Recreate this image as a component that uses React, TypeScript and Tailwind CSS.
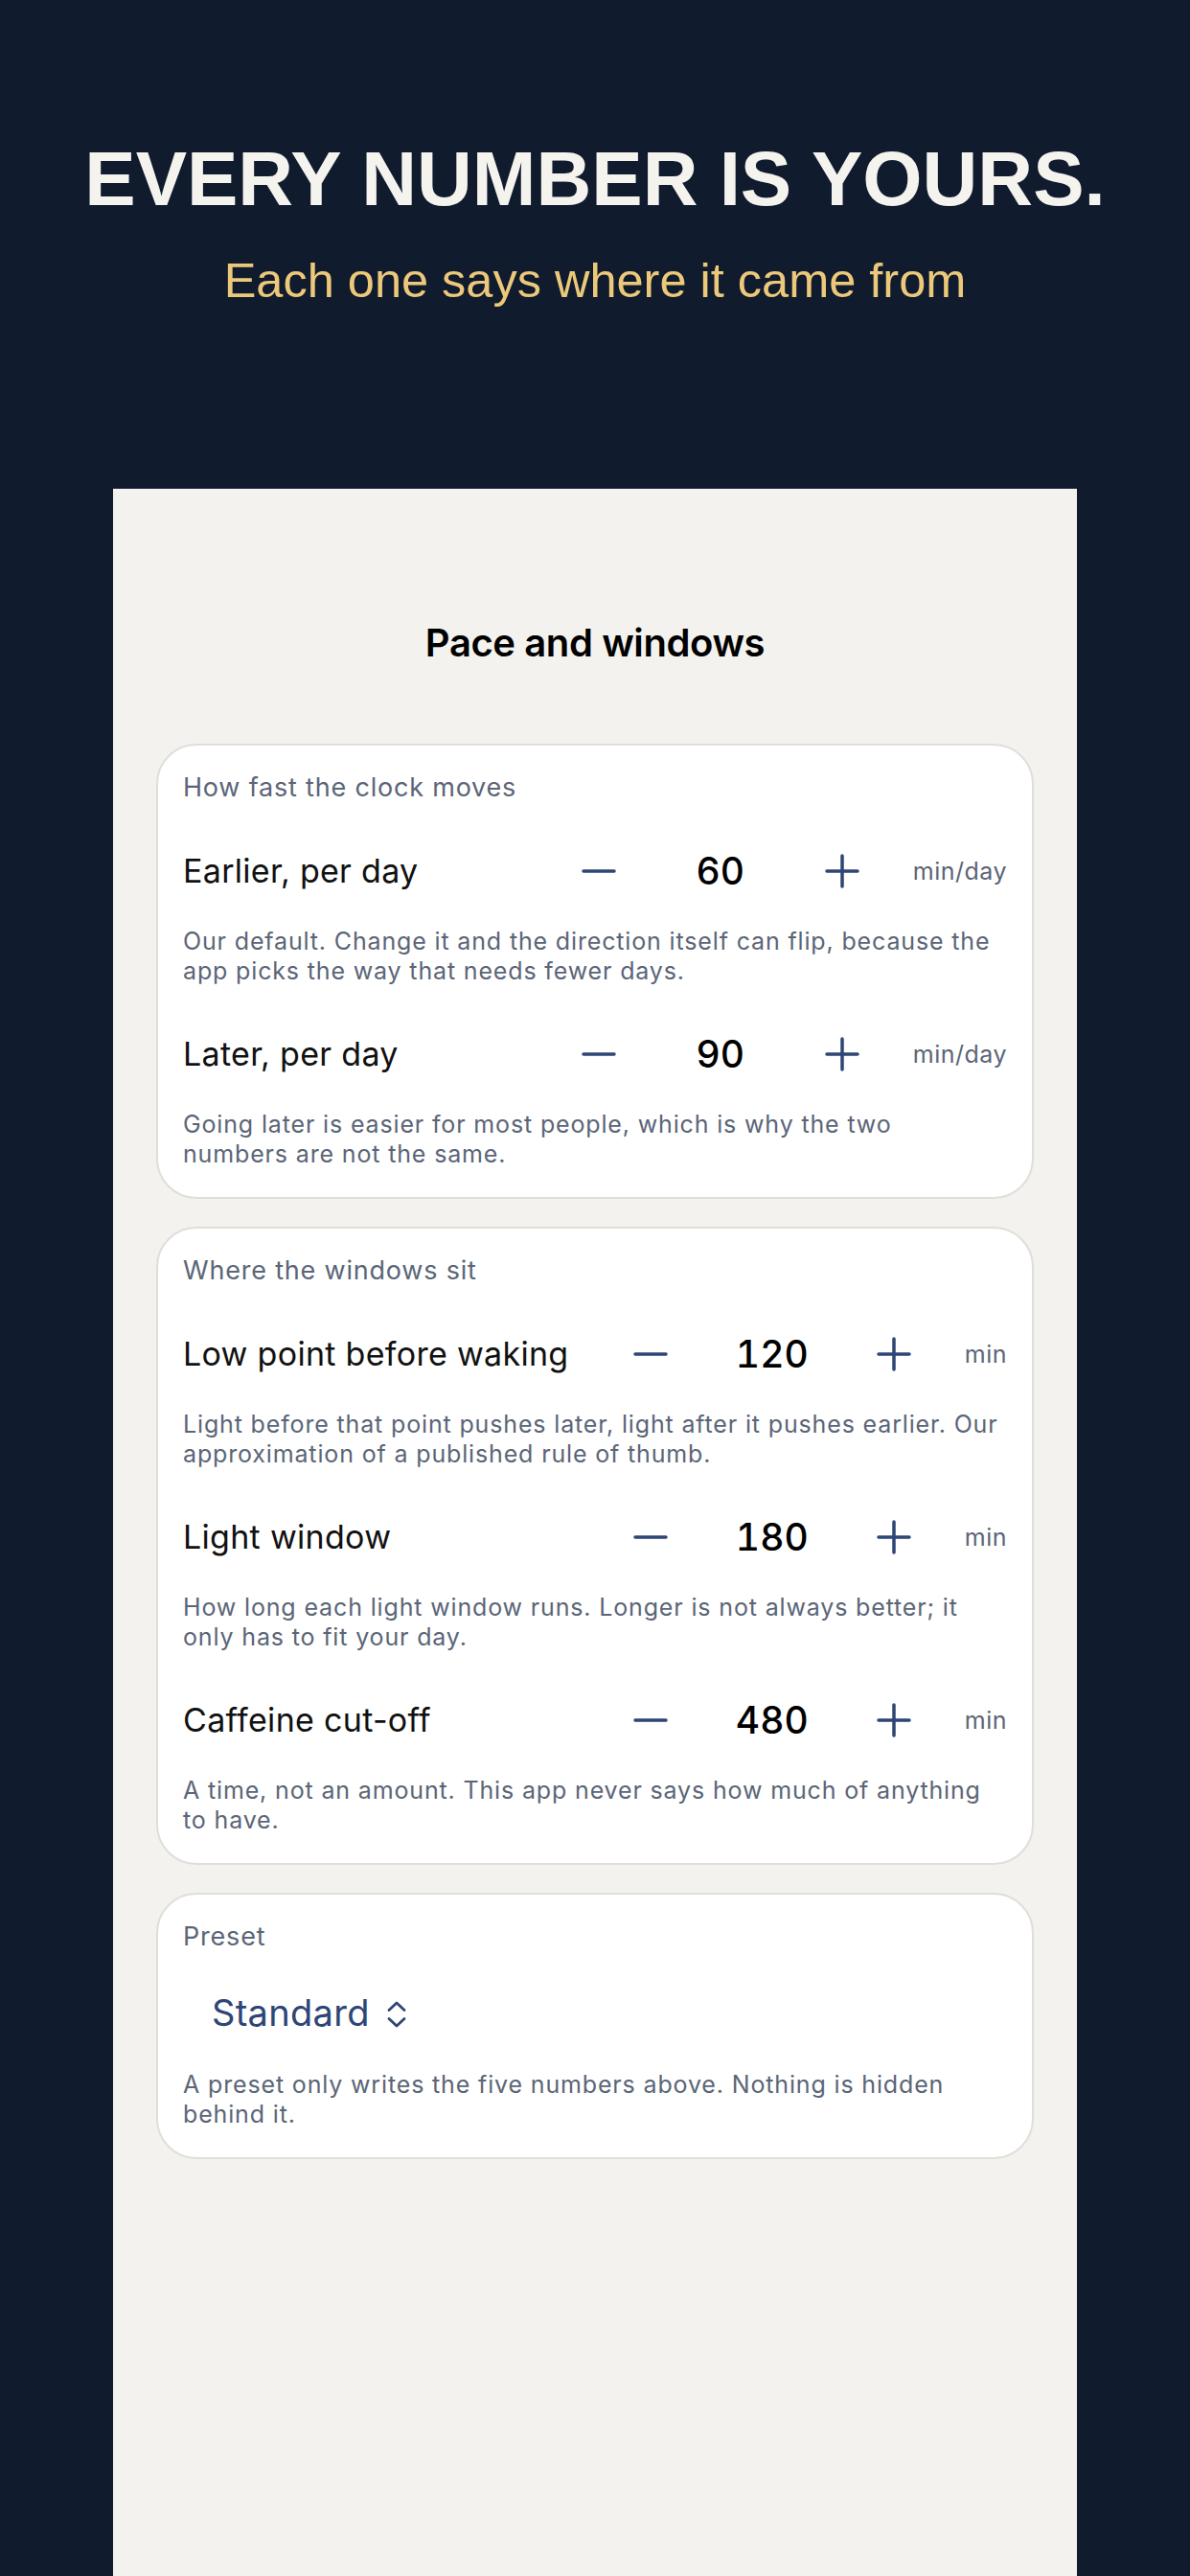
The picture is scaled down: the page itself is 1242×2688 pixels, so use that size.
import React from "react";

const NAVY = "#2d4675";

function Minus() {
  return (
    <svg width="36" height="36" viewBox="0 0 36 36" fill="none">
      <line x1="2" y1="18" x2="34" y2="18" stroke={NAVY} strokeWidth="3.5" strokeLinecap="round" />
    </svg>
  );
}

function Plus() {
  return (
    <svg width="36" height="36" viewBox="0 0 36 36" fill="none">
      <line x1="2" y1="18" x2="34" y2="18" stroke={NAVY} strokeWidth="3.5" strokeLinecap="round" />
      <line x1="18" y1="2" x2="18" y2="34" stroke={NAVY} strokeWidth="3.5" strokeLinecap="round" />
    </svg>
  );
}

function UpDown() {
  return (
    <svg width="22" height="30" viewBox="0 0 22 30" fill="none" className="mt-[4px]">
      <polyline points="3,10.5 11,3 19,10.5" stroke={NAVY} strokeWidth="2.8" strokeLinecap="round" strokeLinejoin="round" />
      <polyline points="3,19.5 11,27 19,19.5" stroke={NAVY} strokeWidth="2.8" strokeLinecap="round" strokeLinejoin="round" />
    </svg>
  );
}

function Desc({ lines, className }: { lines: string[]; className?: string }) {
  return (
    <p className={`text-[25px] leading-[31px] tracking-[0.85px] text-[#5b6577] ${className ?? ""}`}>
      {lines.map((l, i) => (
        <span key={i} className="block whitespace-nowrap">
          {l}
        </span>
      ))}
    </p>
  );
}

function Row({ label, value, unit, desc }: { label: string; value: string; unit: string; desc: string[] }) {
  return (
    <div className="flex flex-col">
      <div className="flex h-[80px] items-center">
        <div className="flex-1 text-[34px] leading-[40px] tracking-[0.3px] text-[#111111]">{label}</div>
        <div className="flex items-center">
          <div className="flex w-[60px] items-center justify-center"><Minus /></div>
          <div className="w-[194px] text-center text-[39px] font-medium leading-[44px] text-black tabular-nums">{value}</div>
          <div className="flex w-[60px] items-center justify-center"><Plus /></div>
        </div>
        <div className="ml-[44px] text-[25px] leading-[30px] tracking-[0.5px] text-[#5b6577]">{unit}</div>
      </div>
      <Desc lines={desc} className="mt-[18px]" />
    </div>
  );
}

function Card({ title, children }: { title: string; children: React.ReactNode }) {
  return (
    <div className="rounded-[42px] border-2 border-[#e0ded8] bg-white px-[26px] pt-[28px] pb-[29px]">
      <div className="text-[27px] leading-[32px] tracking-[0.8px] text-[#5b6577]">{title}</div>
      <div className="mt-[31px] flex flex-col gap-[31px]">{children}</div>
    </div>
  );
}

export default function App() {
  return (
    <div className="flex min-h-[2688px] w-full flex-col bg-[#111b2e]" style={{ fontFamily: "Inter, 'Noto Sans', sans-serif" }}>
      <header className="flex flex-col items-center pt-[147px]">
        <h1 className="text-[80px] font-bold leading-none text-[#f5f3ee]" style={{ fontFamily: "'Liberation Sans', Arial, sans-serif" }}>
          EVERY NUMBER IS YOURS.
        </h1>
        <p className="mt-[41px] text-[50.5px] leading-none text-[#ecc97a]" style={{ fontFamily: "'Liberation Sans', Arial, sans-serif" }}>
          Each one says where it came from
        </p>
      </header>
      <main className="mx-[118px] mt-[191px] flex-1 bg-[#f3f2ee] px-[45px] pt-[141px] pb-[60px]">
        <h2 className="text-center text-[40px] font-semibold leading-none tracking-[-0.4px] text-black">Pace and windows</h2>
        <div className="mt-[85px] flex flex-col gap-[29px]">
          <Card title="How fast the clock moves">
            <Row
              label="Earlier, per day"
              value="60"
              unit="min/day"
              desc={[
                "Our default. Change it and the direction itself can flip, because the",
                "app picks the way that needs fewer days.",
              ]}
            />
            <Row
              label="Later, per day"
              value="90"
              unit="min/day"
              desc={["Going later is easier for most people, which is why the two", "numbers are not the same."]}
            />
          </Card>
          <Card title="Where the windows sit">
            <Row
              label="Low point before waking"
              value="120"
              unit="min"
              desc={[
                "Light before that point pushes later, light after it pushes earlier. Our",
                "approximation of a published rule of thumb.",
              ]}
            />
            <Row
              label="Light window"
              value="180"
              unit="min"
              desc={["How long each light window runs. Longer is not always better; it", "only has to fit your day."]}
            />
            <Row
              label="Caffeine cut-off"
              value="480"
              unit="min"
              desc={["A time, not an amount. This app never says how much of anything", "to have."]}
            />
          </Card>
          <div className="rounded-[42px] border-2 border-[#e0ded8] bg-white px-[26px] pt-[28px] pb-[29px]">
            <div className="text-[27px] leading-[32px] tracking-[0.8px] text-[#5b6577]">Preset</div>
            <div className="mt-[31px] flex h-[64px] items-center gap-[17px] pl-[30px]">
              <span className="text-[38px] leading-[44px] tracking-[0.3px] text-[#2d4675]">Standard</span>
              <UpDown />
            </div>
            <Desc
              className="mt-[28px]"
              lines={["A preset only writes the five numbers above. Nothing is hidden", "behind it."]}
            />
          </div>
        </div>
      </main>
    </div>
  );
}
